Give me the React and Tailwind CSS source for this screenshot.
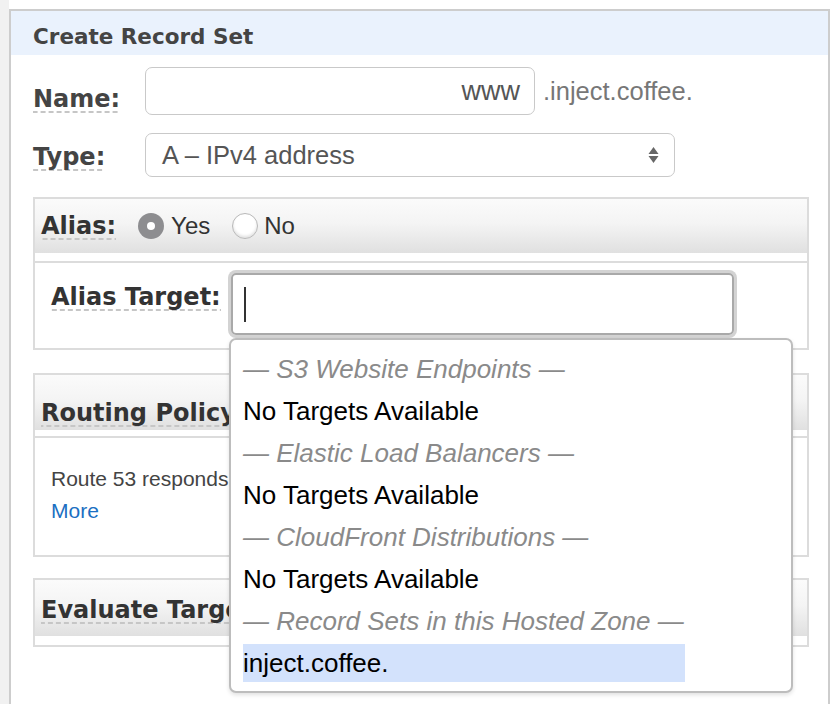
import React from 'react';

const bold = "font-['DejaVu_Sans',sans-serif] font-bold text-[#333]";
const sans = "font-['Liberation_Sans',Arial,sans-serif]";
const dash = 'bg-[linear-gradient(to_right,#c6c6c6_5px,transparent_5px)] bg-[length:8px_2px] bg-repeat-x bg-bottom';
const sectionHead = 'bg-[linear-gradient(to_bottom,#fbfbfb,#f4f4f4_45%,#e0e0e0)]';

function Label({ children, className = '' }) {
  return (
    <span className={`${bold} ${dash} inline-block text-[24px] leading-[28px] ${className}`}>
      {children}
    </span>
  );
}

function Radio({ checked }) {
  if (checked) {
    return (
      <span className="flex h-[26px] w-[26px] items-center justify-center rounded-full bg-[#8d8d90]">
        <span className="h-[8px] w-[8px] rounded-full bg-white" />
      </span>
    );
  }
  return (
    <span className="h-[26px] w-[26px] rounded-full border border-[#b8b8b8] bg-white shadow-[inset_0_-2px_3px_rgba(0,0,0,0.12)]" />
  );
}

function GroupHead({ children }) {
  return (
    <div className={`${sans} flex h-[42px] items-center text-[26px] italic text-[#8a8a8a]`}>
      — {children} —
    </div>
  );
}

function Item({ children }) {
  return (
    <div className={`${sans} flex h-[42px] items-center text-[26px] text-black`}>{children}</div>
  );
}

export default function App() {
  return (
    <div className="relative flex h-[704px] w-[840px] overflow-hidden bg-white">
      <div className="h-full w-[9px] bg-[#f1f1f1]" />

      <div className="mt-[9px] h-[695px] w-[821px] border-x-2 border-t-2 border-[#cdcdcd]">
        <div className={`${bold} flex h-[44px] items-center bg-[#eaf2fd] pl-[22px] pt-[8px] text-[21.5px] text-[#444]`}>
          Create Record Set
        </div>

        <div className="pl-[22px] pr-[19px]">
          {/* Name */}
          <div className="mt-[12px] flex h-[48px] items-start">
            <div className="w-[112px]">
              <Label className="mt-[18px] text-[#444]">Name:</Label>
            </div>
            <div className={`${sans} flex h-[48px] w-[390px] items-center justify-end rounded-[7px] border border-[#c9c9c9] pr-[14px] text-[27px] text-[#555]`}>
              www
            </div>
            <span className={`${sans} ml-[8px] self-center text-[25.5px] text-[#777]`}>.inject.coffee.</span>
          </div>

          {/* Type */}
          <div className="mt-[18px] flex h-[44px] items-start">
            <div className="w-[112px]">
              <Label className="mt-[10px] text-[#444]">Type:</Label>
            </div>
            <div className={`${sans} flex h-[44px] w-[530px] items-center justify-between rounded-[7px] border border-[#c9c9c9] pl-[16px] pr-[15px] text-[25.5px] text-[#555]`}>
              <span>A – IPv4 address</span>
              <svg width="11" height="18" viewBox="0 0 11 18">
                <path d="M5.5 1 L10.5 8 L0.5 8 Z" fill="#666" />
                <path d="M0.5 10 L10.5 10 L5.5 17 Z" fill="#666" />
              </svg>
            </div>
          </div>

          {/* Alias */}
          <div className="mt-[20px] border-2 border-[#dcdcdc]">
            <div className={`${sectionHead} flex h-[54px] items-center pl-[6px]`}>
              <Label>Alias:</Label>
              <div className="ml-[22px] flex items-center">
                <Radio checked />
                <span className={`${sans} ml-[7px] text-[24px] text-[#333]`}>Yes</span>
              </div>
              <div className="ml-[22px] flex items-center">
                <Radio />
                <span className={`${sans} ml-[6px] text-[24px] text-[#333]`}>No</span>
              </div>
            </div>
            <div className="h-[10px] border-b-2 border-[#dcdcdc]" />
            <div className="flex h-[85px] items-start pl-[16px]">
              <Label className="mt-[20px]">Alias Target:</Label>
              <div className="ml-[10px] mt-[10px] h-[62px] w-[503px] rounded-[5px] border-2 border-[#a9a9a9] pl-[11px] pt-[12px] shadow-[0_0_0_3px_#d3d3d3]">
                <div className="h-[35px] w-[2px] bg-[#333]" />
              </div>
            </div>
          </div>

          {/* Routing Policy */}
          <div className="mt-[23px] border-2 border-[#dcdcdc]">
            <div className={`${sectionHead} flex h-[55px] items-end pb-[3px] pl-[6px]`}>
              <Label>Routing Policy</Label>
            </div>
            <div className="h-[8px] border-b-2 border-[#dcdcdc]" />
            <div className={`${sans} h-[117px] pl-[16px] pt-[25px] text-[21px] leading-[32px] text-[#444]`}>
              <div>Route 53 responds to queries based only on the values in this record.</div>
              <div className="text-[#1b6fc2]">More</div>
            </div>
          </div>

          {/* Evaluate Target Health */}
          <div className="mt-[21px] border-x-2 border-t-2 border-[#dcdcdc]">
            <div className={`${sectionHead} flex h-[56px] items-end pb-[12px] pl-[6px]`}>
              <Label>Evaluate Target Health</Label>
            </div>
            <div className="h-[11px] border-b-2 border-[#dcdcdc]" />
          </div>
        </div>
      </div>

      {/* Alias target dropdown */}
      <div className="absolute left-[229px] top-[338px] h-[355px] w-[564px] rounded-[7px] border-2 border-[#bdbdbd] bg-white pl-[12px] pt-[8px] shadow-[0_2px_4px_rgba(0,0,0,0.12)]">
        <GroupHead>S3 Website Endpoints</GroupHead>
        <Item>No Targets Available</Item>
        <GroupHead>Elastic Load Balancers</GroupHead>
        <Item>No Targets Available</Item>
        <GroupHead>CloudFront Distributions</GroupHead>
        <Item>No Targets Available</Item>
        <GroupHead>Record Sets in this Hosted Zone</GroupHead>
        <div className={`${sans} mt-[2px] flex h-[38px] w-[442px] items-center bg-[#d3e2fc] text-[26px] text-black`}>
          inject.coffee.
        </div>
      </div>
    </div>
  );
}
